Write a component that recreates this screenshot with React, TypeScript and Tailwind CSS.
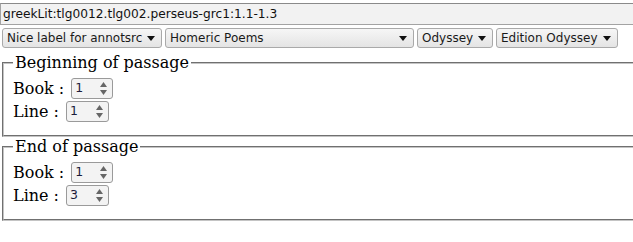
import React from "react";

interface Choice {
  label: string;
  width: string;
}

const choices: Choice[] = [
  { label: "Nice label for annotsrc", width: "w-[160px]" },
  { label: "Homeric Poems", width: "w-[249px]" },
  { label: "Odyssey", width: "w-[76px]" },
  { label: "Edition Odyssey", width: "w-[122px]" },
];

function DownArrow() {
  return (
    <svg width="8" height="5" viewBox="0 0 8 5" className="shrink-0">
      <path d="M0 0 L8 0 L4 5 Z" fill="#111" />
    </svg>
  );
}

function FakeSelect({ label, width }: Choice) {
  return (
    <div
      className={`${width} flex h-[20px] items-center justify-between rounded-[3px] border border-[#a9a9a9] bg-gradient-to-b from-[#f6f6f6] to-[#e4e4e4] pl-[4px] pr-[6px] text-[12px] leading-none text-[#1a1a1a]`}
    >
      <span className="whitespace-nowrap">{label}</span>
      <DownArrow />
    </div>
  );
}

function Spinner({ value, width }: { value: string; width: string }) {
  return (
    <span
      className={`${width} ml-[2px] inline-flex h-[21px] items-center justify-between rounded-[3px] border border-[#9a9a9a] bg-[#f3f3f3] pl-[3px] pr-[5px] align-middle font-['DejaVu_Sans',sans-serif] text-[12.5px] leading-none text-[#1c1c3a]`}
    >
      <span>{value}</span>
      <span className="flex flex-col items-center gap-[3px]">
        <svg width="7" height="5" viewBox="0 0 7 5">
          <path d="M3.5 0 L7 5 L0 5 Z" fill="#666" />
        </svg>
        <svg width="7" height="5" viewBox="0 0 7 5">
          <path d="M0 0 L7 0 L3.5 5 Z" fill="#666" />
        </svg>
      </span>
    </span>
  );
}

function Passage({ title, book, line }: { title: string; book: string; line: string }) {
  return (
    <fieldset className="ml-[2px] border-2 border-[#c4c4c4] [border-style:groove] px-[9px] pb-[12px] pt-[5px]">
      <legend className="px-[2px] leading-[19px]">{title}</legend>
      <div className="flex h-[23px] items-center whitespace-pre">
        Book : <Spinner value={book} width="w-[42px]" />
      </div>
      <div className="flex h-[23px] items-center whitespace-pre">
        Line : <Spinner value={line} width="w-[43px]" />
      </div>
    </fieldset>
  );
}

export default function App() {
  return (
    <div className="h-[242px] w-[633px] overflow-hidden bg-white font-['DejaVu_Serif',serif] text-[16px] text-black">
      <div className="pt-[3px]">
        <input
          readOnly
          value="greekLit:tlg0012.tlg002.perseus-grc1:1.1-1.3"
          className="block h-[22px] w-[636px] border border-[#a3a3a3] border-t-[#8a8a8a] bg-[#f2f2f2] px-[2px] font-['DejaVu_Sans',sans-serif] text-[12.2px] text-[#111] outline-none"
        />
      </div>
      <div className="mt-[3px] flex gap-[3px] pl-[2px] font-['DejaVu_Sans',sans-serif]">
        {choices.map((c) => (
          <FakeSelect key={c.label} label={c.label} width={c.width} />
        ))}
      </div>
      <div className="mt-[5px] w-[640px]">
        <Passage title="Beginning of passage" book="1" line="1" />
        <Passage title="End of passage" book="1" line="3" />
      </div>
    </div>
  );
}
